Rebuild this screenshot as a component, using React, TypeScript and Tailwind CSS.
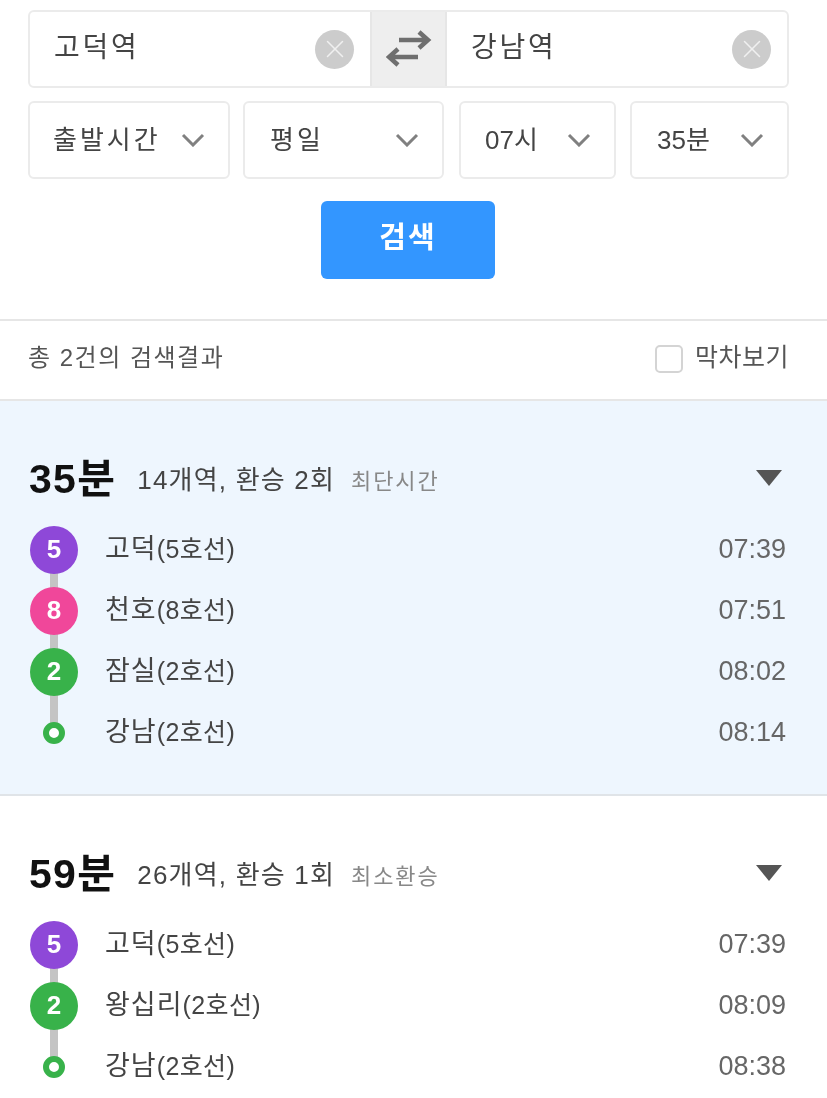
import { X } from 'lucide-react';

type Stop = { line?: string; color?: string; name: string; sub: string; time: string };

const font = "font-['Liberation_Sans','Noto_Sans_CJK_KR',sans-serif]";

const routes: { total: string; info: string; tag: string; active: boolean; stops: Stop[] }[] = [
    {
        total: '35분',
        info: '14개역, 환승 2회',
        tag: '최단시간',
        active: true,
        stops: [
            { line: '5', color: 'bg-[#8e48d8]', name: '고덕', sub: '(5호선)', time: '07:39' },
            { line: '8', color: 'bg-[#f0479a]', name: '천호', sub: '(8호선)', time: '07:51' },
            { line: '2', color: 'bg-[#38b24a]', name: '잠실', sub: '(2호선)', time: '08:02' },
            { name: '강남', sub: '(2호선)', time: '08:14' },
        ],
    },
    {
        total: '59분',
        info: '26개역, 환승 1회',
        tag: '최소환승',
        active: false,
        stops: [
            { line: '5', color: 'bg-[#8e48d8]', name: '고덕', sub: '(5호선)', time: '07:39' },
            { line: '2', color: 'bg-[#38b24a]', name: '왕십리', sub: '(2호선)', time: '08:09' },
            { name: '강남', sub: '(2호선)', time: '08:38' },
        ],
    },
];

const StationInput = ({ value }: { value: string }) => (
    <div className="flex-1 flex items-center justify-between pl-[24px] pr-[16px]">
        <span className="text-[28px] tracking-[2.7px] text-[#444] -mt-[2px]">{value}</span>
        <span className="w-[39px] h-[39px] rounded-full bg-[#cccccc] flex items-center justify-center">
            <X size={30} strokeWidth={1.2} className="text-[#f0f0f0]" />
        </span>
    </div>
);

const Select = ({ label, box }: { label: string; box: string }) => (
    <div className={`${box} h-[78px] border-2 border-[#ebebeb] rounded-[6px] flex items-center justify-between pr-[23px] bg-white`}>
        <span className="text-[26px] text-[#444]">{label}</span>
        <svg width="24" height="14" viewBox="0 0 24 14" fill="none" stroke="#808080" strokeWidth="3">
            <path d="M2 2l10 10L22 2" />
        </svg>
    </div>
);

const Route = ({ route }: { route: (typeof routes)[number] }) => (
    <section className={`${route.active ? 'bg-[#eef6fe] border-b-2 border-[#e0e4e8] h-[395px]' : 'bg-white'} pt-[47px] pl-[30px] pr-[41px]`}>
        <div className="flex items-center h-[60px]">
            <span className="text-[41px] font-bold text-[#111] tracking-[1.3px] -ml-[1px] mt-[4px]">{route.total}</span>
            <span className="text-[26px] tracking-[1.2px] text-[#444] ml-[21px] mt-[4px]">{route.info}</span>
            <span className="text-[22px] tracking-[1.9px] text-[#888] ml-[16px] mt-[6px]">{route.tag}</span>
            <span className="ml-auto mr-[4px] w-0 h-0 border-x-[13px] border-x-transparent border-t-[16px] border-t-[#555]" />
        </div>
        <div className="relative mt-[11px]">
            <span className="absolute left-[20px] top-[30px] bottom-[30px] w-[8px] bg-[#c4c4c4]" />
            {route.stops.map((stop) => (
                <div key={stop.name + stop.time} className="relative flex items-center h-[61px]">
                    <div className="w-[48px] flex justify-center">
                        {stop.line ? (
                            <span className={`${stop.color} w-[48px] h-[48px] rounded-full flex items-center justify-center text-white font-bold text-[26px]`}>
                                {stop.line}
                            </span>
                        ) : (
                            <span className="w-[22px] h-[22px] rounded-full border-[6px] border-[#38b24a] bg-white" />
                        )}
                    </div>
                    <span className="ml-[27px] text-[27px] tracking-[1px] text-[#444]">
                        {stop.name}
                        <span className="text-[25px] tracking-[0.4px]">{stop.sub}</span>
                    </span>
                    <span className="ml-auto text-[27px] text-[#666]">{stop.time}</span>
                </div>
            ))}
        </div>
    </section>
);

const App = () => {
    return (
        <div className={`w-[827px] h-[1098px] overflow-hidden bg-white blur-[0.5px] ${font}`}>
            <div className="pl-[28px] pr-[38px] pt-[10px] pb-[40px] border-b-2 border-[#e6e6e6]">
                <div className="h-[78px] flex border-2 border-[#ebebeb] rounded-[6px]">
                    <StationInput value="고덕역" />
                    <div className="w-[77px] bg-[#eeeeee] flex items-center justify-center border-x-2 border-[#e6e6e6]">
                        <svg width="46" height="40" viewBox="0 0 46 40" fill="none" stroke="#6f6f6f" strokeWidth="4.5">
                            <path d="M13 11h29M33 3l9 8-9 8" />
                            <path d="M32 28H3M12 20l-9 8 9 8" />
                        </svg>
                    </div>
                    <StationInput value="강남역" />
                </div>
                <div className="flex mt-[13px]">
                    <Select label="출발시간" box="w-[202px] pl-[23px] [&>span]:tracking-[3px]" />
                    <Select label="평일" box="w-[201px] ml-[13px] pl-[25px] [&>span]:tracking-[3px]" />
                    <Select label="07시" box="w-[157px] ml-[15px] pl-[24px]" />
                    <Select label="35분" box="w-[159px] ml-[14px] pl-[25px]" />
                </div>
                <div className="flex justify-center mt-[22px]">
                    <button className="w-[174px] h-[78px] pb-[2px] -ml-[1px] rounded-[6px] bg-[#3396ff] text-white font-bold text-[29px] tracking-[2px]">
                        검색
                    </button>
                </div>
            </div>
            <div className="h-[80px] pb-[3px] pl-[28px] pr-[38px] flex items-center justify-between border-b-2 border-[#e6e6e6]">
                <span className="text-[24px] tracking-[1.5px] text-[#555] -mt-[1px]">총 2건의 검색결과</span>
                <label className="flex items-center gap-[12px]">
                    <span className="w-[28px] h-[28px] border-2 border-[#d4d4d4] rounded-[5px] bg-white" />
                    <span className="text-[25px] tracking-[0.5px] text-[#555] -mt-[1px]">막차보기</span>
                </label>
            </div>
            {routes.map((route) => (
                <Route key={route.total} route={route} />
            ))}
        </div>
    );
};

export default App;
